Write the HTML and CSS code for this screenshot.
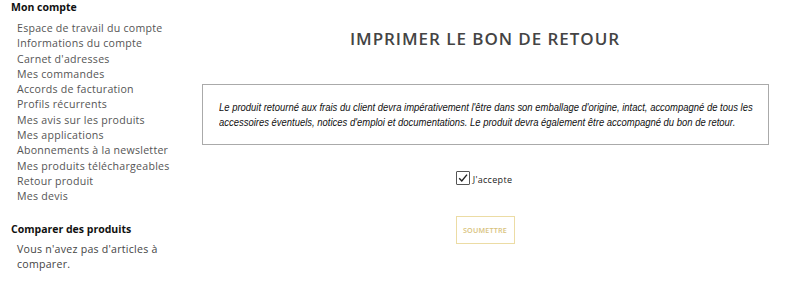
FILE: index.html
```html
<!DOCTYPE html>
<html lang="fr">
<head>
<meta charset="utf-8">
<link rel="stylesheet" href="styles.css">
</head>
<body>
<div class="page">
  <aside class="sidebar">
    <div class="block">
      <h3 class="block-title">Mon compte</h3>
      <ul class="nav">
        <li>Espace de travail du compte</li>
        <li>Informations du compte</li>
        <li>Carnet d'adresses</li>
        <li>Mes commandes</li>
        <li>Accords de facturation</li>
        <li>Profils récurrents</li>
        <li>Mes avis sur les produits</li>
        <li>Mes applications</li>
        <li>Abonnements à la newsletter</li>
        <li>Mes produits téléchargeables</li>
        <li>Retour produit</li>
        <li>Mes devis</li>
      </ul>
    </div>
    <div class="block compare">
      <h3 class="block-title">Comparer des produits</h3>
      <p class="empty">Vous n'avez pas d'articles à comparer.</p>
    </div>
  </aside>
  <main class="main">
    <h1 class="title">IMPRIMER LE BON DE RETOUR</h1>
    <div class="notice">
      <p>Le produit retourné aux frais du client devra impérativement l'être dans son emballage d'origine, intact, accompagné de tous les accessoires éventuels, notices d'emploi et documentations. Le produit devra également être accompagné du bon de retour.</p>
    </div>
    <label class="accept">
      <span class="check"><svg width="12" height="12" viewBox="0 0 12 12"><path d="M2.2 6.2 L4.8 9 L10 2.6" fill="none" stroke="#222" stroke-width="1.4"/></svg></span>
      <span class="accept-text">J'accepte</span>
    </label>
    <div class="actions">
      <button class="submit">SOUMETTRE</button>
    </div>
  </main>
</div>
</body>
</html>
```

FILE: styles.css
```css
html, body {
  margin: 0;
  padding: 0;
  background: #fff;
}
body {
  font-family: "Open Sans", "Noto Sans", sans-serif;
  color: #555;
}
.page {
  display: flex;
  padding: 0 0 0 11px;
}
.sidebar {
  width: 191px;
  flex: none;
}
.block-title {
  margin: 0;
  font-size: 10.5px;
  font-weight: 700;
  color: #111;
  line-height: 14px;
}
.nav {
  list-style: none;
  margin: 7px 0 0 6px;
  padding: 0;
}
.nav li {
  font-size: 10.6px;
  line-height: 15.3px;
  letter-spacing: 0.25px;
  color: #555;
}
.compare {
  margin-top: 17px;
}
.empty {
  margin: 6px 0 0 6px;
  font-size: 10.6px;
  line-height: 15.3px;
  letter-spacing: 0.25px;
  color: #444;
  width: 150px;
}
.main {
  width: 566px;
  flex: none;
  display: flex;
  flex-direction: column;
}
.title {
  margin: 28px 0 0 0;
  text-align: center;
  font-size: 17px;
  font-weight: 600;
  letter-spacing: 0.95px;
  color: #444;
  line-height: 22px;
}
.notice {
  margin-top: 34px;
  border: 1px solid #aaa;
  height: 61px;
  box-sizing: border-box;
  width: 567px;
  padding: 15px 16px 0 16px;
  overflow: hidden;
}
.notice p {
  margin: 0;
  width: 622px;
  transform: scaleX(0.86);
  transform-origin: left top;
  font-family: "Liberation Sans", Arial, sans-serif;
  font-style: italic;
  font-size: 11px;
  line-height: 15px;
  color: #111;
}
.accept {
  margin-top: 26px;
  display: flex;
  align-items: flex-end;
  justify-content: center;
  gap: 3px;
  padding-right: 2px;
}
.check {
  width: 12px;
  height: 12px;
  border: 1px solid #555;
  border-radius: 1px;
  display: flex;
}
.accept-text {
  font-size: 9px;
  line-height: 11px;
  color: #222;
  letter-spacing: 0.3px;
}
.actions {
  margin-top: 31px;
  display: flex;
  justify-content: center;
}
.submit {
  width: 59px;
  height: 28px;
  border: 1px solid #ecdca4;
  background: #fff;
  color: #d8c27c;
  font-family: "Open Sans", sans-serif;
  font-size: 7.2px;
  font-weight: 600;
  letter-spacing: 0.2px;
  padding: 0;
}
```
